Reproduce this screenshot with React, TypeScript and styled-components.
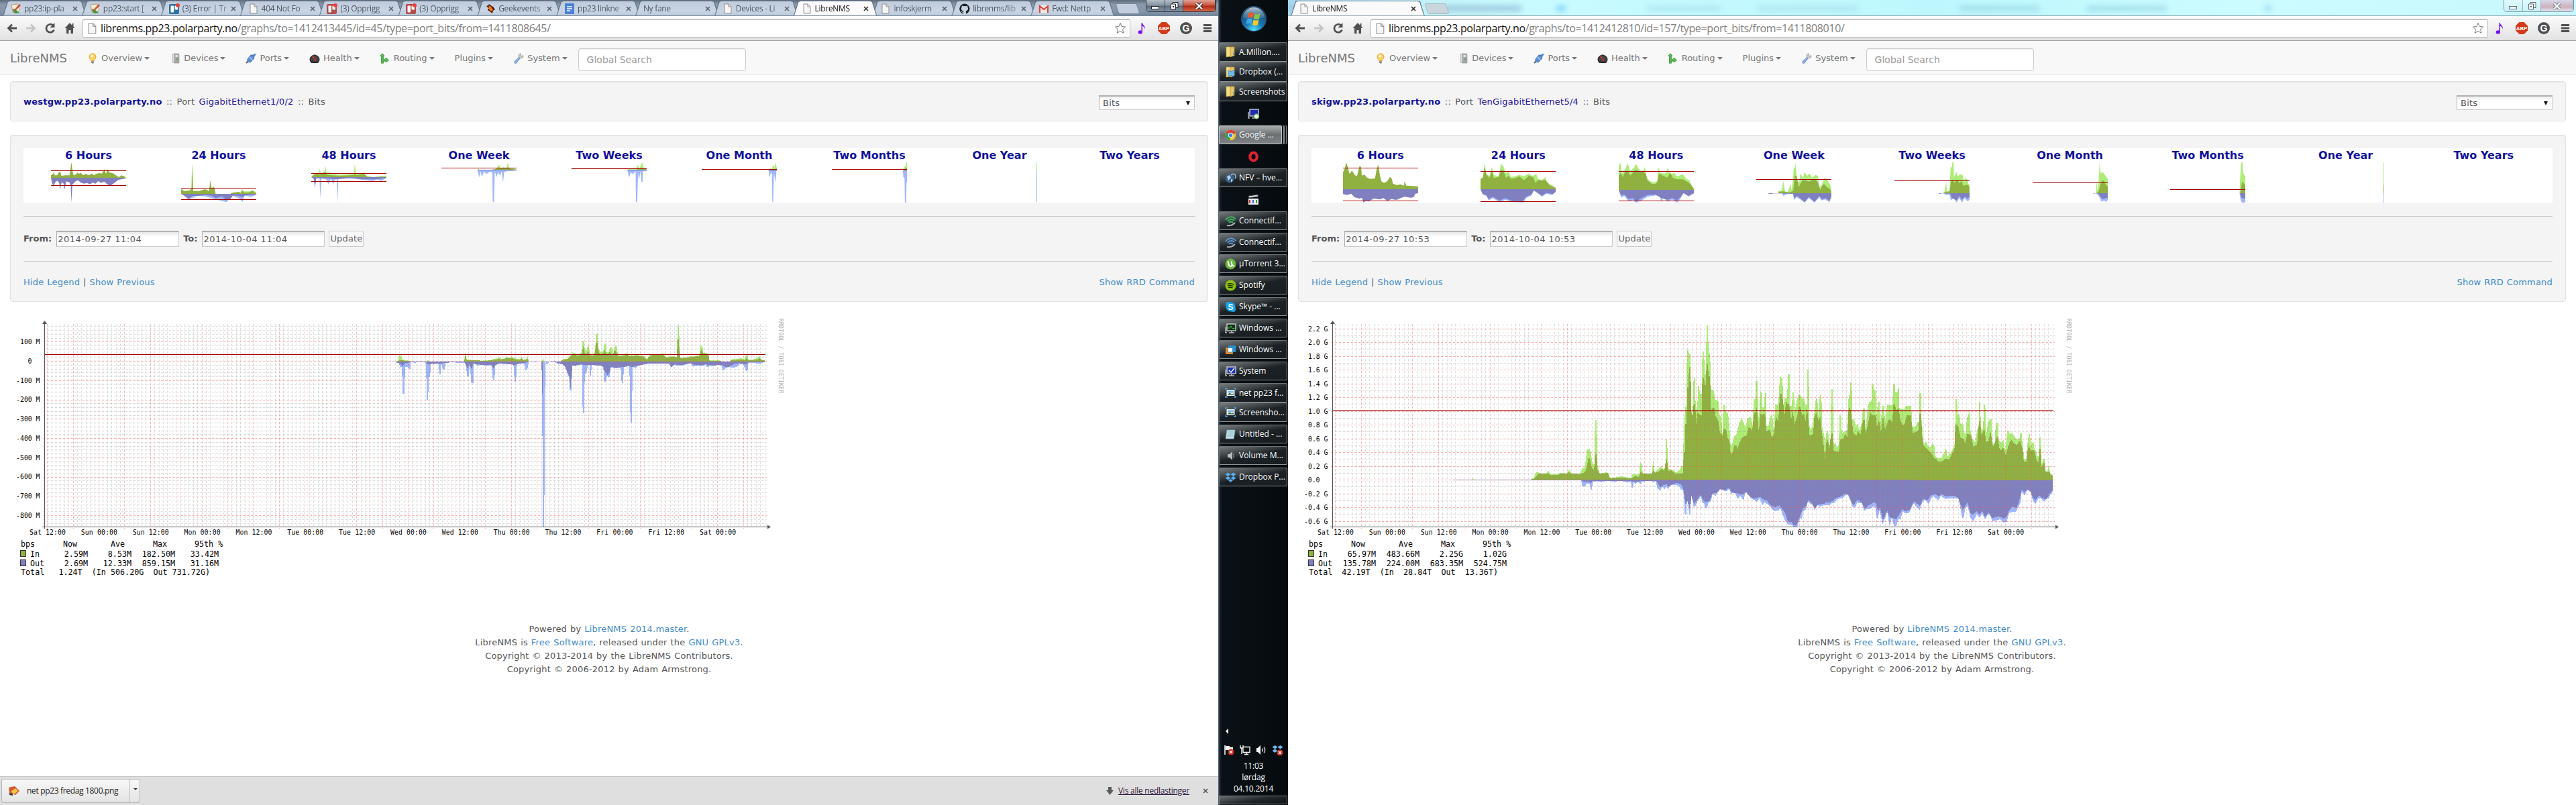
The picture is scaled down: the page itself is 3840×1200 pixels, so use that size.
import React from 'react';
import styled, { createGlobalStyle, css } from 'styled-components';

const Global = createGlobalStyle`
  * { box-sizing: border-box; }
  body { margin: 0; background: #fff; }
`;

const verdana = "'DejaVu Sans', Verdana, sans-serif";
const segoe = "'Open Sans', 'Segoe UI', sans-serif";

/* ---------- shell ---------- */
const Desktop = styled.div`
  display: flex; width: 3840px; height: 1200px; overflow: hidden; background: #fff;
`;
const Window = styled.div<{ $w: number }>`
  width: ${p => p.$w}px; height: 1200px; flex: none; display: flex; flex-direction: column;
  background: #fff; font: 13px/20px ${verdana}; color: #555; overflow: hidden;
`;
const TitleBar = styled.div<{ $aero?: boolean }>`
  height: 24px; flex: none; display: flex; position: relative; padding-left: 3px; overflow: hidden;
  background: ${p => p.$aero
    ? 'linear-gradient(90deg,#a8d8ee 0,#c4f4fb 12%,#c8fbff 20%,#bdf7fd 50%,#ccfcff 75%,#c8f8fd 100%)'
    : 'linear-gradient(180deg,#5d6b7b 0,#8b9bae 30%,#8495a9 75%,#74869b 100%)'};
  border-bottom: 1px solid ${p => (p.$aero ? '#8fa9ae' : '#76879b')};
`;
const Haze = styled.i<{ $l: number; $w: number; $c: string }>`
  position: absolute; left: ${p => p.$l}px; width: ${p => p.$w}px; top: 9px; height: 7px;
  background: ${p => p.$c}; filter: blur(4px); opacity: .7;
`;
const TabBox = styled.div<{ $active?: boolean; $wide?: boolean }>`
  position: relative; flex: none; display: flex; align-items: center; height: 24px;
  width: ${p => (p.$wide ? 202 : 127)}px; margin-right: -9.15px; padding: 2px 14px 0 13px;
  clip-path: polygon(0 100%, 2px 90%, 8px 6%, 11px 1px, calc(100% - 11px) 1px, calc(100% - 8px) 6%, calc(100% - 2px) 90%, 100% 100%);
  background: #66778a; z-index: ${p => (p.$active ? 2 : 1)};
  font: 12px/18px ${segoe}; letter-spacing: -0.3px; color: ${p => (p.$active ? '#111' : '#4b5560')};
  &::before {
    content: ''; position: absolute; inset: 2px 0 0 0; z-index: -1;
    clip-path: polygon(1px 100%, 3px 90%, 9px 5%, 12px 0, calc(100% - 12px) 0, calc(100% - 9px) 5%, calc(100% - 3px) 90%, calc(100% - 1px) 100%);
    background: ${p => (p.$active ? '#fafafa' : 'linear-gradient(180deg,#bfcbdc,#c9d5e5 60%,#bccada)')};
  }
`;
const TabText = styled.span<{ $noicon?: boolean }>`
  flex: 1; min-width: 0; margin-left: ${p => (p.$noicon ? 0 : 4)}px; white-space: nowrap; overflow: hidden;
  mask-image: linear-gradient(90deg,#000 75%,rgba(0,0,0,.15) 100%);
`;
const NewTab = styled.div<{ $aero?: boolean }>`
  flex: none; width: 32px; height: 16px; margin: 5px 0 0 ${p => (p.$aero ? 10 : 12)}px; transform: skewX(18deg);
  border-radius: 3px; background: ${p => (p.$aero ? '#c9d6db' : '#c2cedd')}; border: 1px solid ${p => (p.$aero ? '#a7bcc2' : '#78899c')};
`;
const Controls = styled.div<{ $aero?: boolean }>`
  position: absolute; right: 3px; top: 0; height: 18px; display: grid; grid-template-columns: 28px 27px 48px;
  border: 1px solid ${p => (p.$aero ? '#7c9aa3' : '#2f3842')}; border-top: 0; border-radius: 0 0 5px 5px; overflow: hidden;
`;
const ControlCell = styled.span<{ $kind: 'plain' | 'close'; $aero?: boolean }>`
  display: flex; align-items: center; justify-content: center;
  border-right: 1px solid ${p => (p.$aero ? '#9ab7bf' : '#3c4651')};
  background: ${p => p.$aero
    ? (p.$kind === 'close' ? 'linear-gradient(180deg,#d7d9ec,#cfb0bb 60%,#dfe6f6)' : 'linear-gradient(180deg,#dffafe,#c9f0f6)')
    : (p.$kind === 'close' ? 'linear-gradient(180deg,#e0a193,#c9513c 48%,#b02a14 52%,#d8684a)' : 'linear-gradient(180deg,#b4bec9,#8592a1 48%,#5f6c7b 52%,#8393a5)')};
`;

/* ---------- toolbar ---------- */
const Toolbar = styled.div`
  height: 37px; flex: none; display: flex; align-items: center; padding: 0 8px;
  background: linear-gradient(180deg,#fbfbfb,#e2e2e2); border-bottom: 1px solid #a3a3a3;
`;
const NavButtons = styled.div`
  width: 115px; display: grid; grid-template-columns: 28px 29px 29px 29px; flex: none;
  & > svg { display: block; margin-left: 1px; }
`;
const Omnibox = styled.div`
  flex: 1; height: 27px; display: flex; align-items: center; padding: 0 5px 0 5px; background: #fff;
  border: 1px solid #b9b9b9; border-top-color: #9c9c9c; border-radius: 2px;
`;
const Url = styled.span`
  flex: 1; margin-left: 4px; font: 16px/24px ${segoe}; letter-spacing: -0.36px; color: #808080; white-space: nowrap;
  b { font-weight: 400; color: #111; }
`;
const Extensions = styled.div`
  width: 123px; flex: none; display: grid; grid-template-columns: 32px 33px 32px 18px; padding-left: 9px;
`;

/* ---------- site header ---------- */
const Navbar = styled.nav`
  height: 51px; flex: none; display: flex; align-items: center; padding-left: 15px;
  background: #f8f8f8; border-bottom: 1px solid #e7e7e7; color: #777;
`;
const Brand = styled.span` font-size: 18px; width: 100px; margin-top: 1px; `;
const NavItem = styled.span`
  display: flex; align-items: center; padding: 2px 15px 0;
  & > svg { margin-right: 5px; }
  &::after { content: ''; margin-left: 3px; border: 4px solid transparent; border-top-color: #777; border-bottom: 0; }
`;
const SearchBox = styled.div`
  width: 250px; height: 34px; margin: 6px 0 0 1px; padding: 0 12px; border: 1px solid #ccc; border-radius: 4px; background: #fff;
  font-size: 14px; line-height: 32px; color: #999; box-shadow: inset 0 1px 1px rgba(0,0,0,.07);
`;

/* ---------- panels ---------- */
const Well = styled.section<{ $h: number; $mt: number }>`
  flex: none; height: ${p => p.$h}px; margin: ${p => p.$mt}px 15px 0; padding: 0 19px; background: #f4f4f4;
  border: 1px solid #e2e2e2; border-radius: 4px; box-shadow: inset 0 1px 1px rgba(0,0,0,.05);
`;
const TitleRow = styled.div`
  display: flex; align-items: center; justify-content: space-between; height: 60px; padding-bottom: 1px;
  letter-spacing: .23px; word-spacing: 2px;
  a { color: #1a0fa0; } a.host { font-weight: 700; color: #11119b; }
`;
const Select = styled.div`
  width: 143px; height: 22px; display: flex; align-items: center; justify-content: space-between; padding: 1px 5px 0;
  margin-top: 3px; border: 1px solid #ccc; border-top: 2px solid #b0b0b0; border-left-color: #b0b0b0; background: linear-gradient(180deg,#eee,#fff 30%);
  &::after { content: ''; border: 3px solid transparent; border-top: 6px solid #111; border-bottom: 0; margin-right: 1px; }
`;
const Strip = styled.div`
  display: grid; grid-template-columns: repeat(9, 1fr); height: 81px; margin-top: 19px; background: #fff;
`;
const Cell = styled.div`
  display: flex; flex-direction: column; align-items: center;
  b { font-size: 16px; line-height: 21px; color: #11119b; }
  svg { display: block; }
`;
const Rule = styled.div<{ $mt: number }>` height: 1px; background: #c8c8c8; margin-top: ${p => p.$mt}px; `;
const FormRow = styled.div`
  display: flex; align-items: center; gap: 6px; height: 24px; margin-top: 21px; b { margin-right: 1px; }
`;
const Field = styled.span<{ $w: number; $button?: boolean }>`
  width: ${p => p.$w}px; height: 24px; padding-left: 1px; line-height: 22px; white-space: nowrap;
  letter-spacing: ${p => (p.$button ? 0.15 : 0.5)}px;
  border: 1px solid #ccc; border-top: 2px solid #b0b0b0; border-left-color: #b0b0b0;
  background: linear-gradient(180deg,#e8e8e8,#fff 35%);
  ${p => p.$button && css`border-top-width: 1px; border-color: #ccc; background: #f8f8f8; color: #666;`}
`;
const LinkRow = styled.div`
  display: flex; justify-content: space-between; margin-top: 21px; letter-spacing: .2px; word-spacing: .5px;
`;
const Link = styled.a` color: #428bca; `;
const GraphArea = styled.div` height: 410px; flex: none; margin-top: 10px; svg { display: block; } `;
const Footer = styled.footer`
  margin-top: 58px; text-align: center; line-height: 20px; letter-spacing: .2px; word-spacing: .6px;
`;

/* ---------- download bar ---------- */
const DownloadBar = styled.div`
  height: 43px; flex: none; margin-top: auto; display: flex; align-items: center; padding: 0 15px 0 2px;
  background: #dfdfdf; border-top: 1px solid #c6c6c6; font: 12px/16px ${segoe}; color: #222;
`;
const DownloadItem = styled.div`
  width: 207px; height: 36px; display: grid; grid-template-columns: 190px 17px; border: 1px solid #b5b5b5; border-radius: 3px;
  background: linear-gradient(180deg,#f7f7f7,#e4e4e4);
  & > span { display: flex; align-items: center; gap: 10px; padding-left: 9px; letter-spacing: -0.33px; }
  & > i { border-left: 1px solid #c0c0c0; display: flex; justify-content: center; padding-top: 13px; }
  & > i::after { content: ''; height: 0; border: 3px solid transparent; border-top-color: #333; border-bottom: 0; }
`;
const ShowAll = styled.span`
  margin-left: auto; display: flex; align-items: center; gap: 7px;
  u { margin-right: 13px; color: #2a1238; letter-spacing: -0.25px; }
`;

/* ---------- taskbar ---------- */
const Taskbar = styled.aside`
  width: 104px; height: 1200px; flex: none; display: flex; flex-direction: column; padding: 0 1px;
  background: linear-gradient(90deg,#5b7080 0,#1d2b35 2px,#0a1116 5px,#050a0d 100%); color: #fff; font: 12px/16px ${segoe};
`;
const Orb = styled.div` height: 63px; flex: none; display: flex; justify-content: center; padding: 9px 0 0 1px; `;
const Task = styled.div<{ $mt: number; $h?: number; $lit?: boolean }>`
  flex: none; height: ${p => p.$h ?? 28}px; margin-top: ${p => p.$mt}px; display: flex; align-items: center; gap: 4px; padding-left: 8px;
  border: 1px solid #6d7477; border-right-color: #a3a8aa; border-bottom-color: #8c9294; border-radius: 2px; white-space: nowrap; overflow: hidden;
  background: linear-gradient(170deg,#777c7e 0,#3e4446 32%,#1b2124 50%,#171d20 100%);
  ${p => p.$lit && css`
    background: linear-gradient(180deg,#a9acad,#6c7072 50%,#7e8284); width: 94px; border-color: #c2c5c6;
    box-shadow: 2px 0 0 #15191b, 4px 0 0 #8c9092, 6px 0 0 #15191b, 8px 0 0 #6a6e70;
  `}
  & > svg { flex: none; }
`;
const TaskIcon = styled.div<{ $h: number }>` flex: none; height: ${p => p.$h}px; display: flex; align-items: center; justify-content: center; `;
const TrayArrow = styled.div` margin: auto 0 16px 10px; height: 8px; width: 0; border: 4px solid transparent; border-right-color: #fff; border-left: 0; `;
const Tray = styled.div` display: grid; grid-template-columns: repeat(4, 24px); height: 18px; padding-left: 7px; flex: none; `;
const Clock = styled.div` text-align: center; line-height: 17px; margin: 5px 0 2px; padding-left: 1px; letter-spacing: -0.2px; flex: none; `;
const ShowDesktop = styled.div`
  height: 13px; margin-bottom: 1px; flex: none; border: 1px solid #767c7f; background: linear-gradient(170deg,#686d70,#23292c 50%,#0f1416);
`;

/* ---------- icons ---------- */
const Close = ({ c = '#555' }: { c?: string }) => (
  <svg width="8" height="8" viewBox="0 0 8 8"><path d="M1 1l6 6M7 1l-6 6" stroke={c} strokeWidth="1.7" /></svg>
);
const Page = ({ s = 16 }: { s?: number }) => (
  <svg width={s} height={s} viewBox="0 0 16 16"><path d="M3 1h6l4 4v10H3z" fill="#f6f6f6" stroke="#8d8d8d" /><path d="M9 1v4h4" fill="none" stroke="#8d8d8d" /></svg>
);
const Favicon = ({ k }: { k: string }) => {
  const box = { width: 16, height: 16, viewBox: '0 0 16 16', style: { flex: 'none' } };
  switch (k) {
    case 'wiki': return <svg {...box}><path d="M1 2l9-1 4 8-6 6-5-2z" fill="#f0ead2" stroke="#b59b7a" /><path d="M3 8l4 1 6 5-5 1-4-2z" fill="#3f9a3c" /><path d="M13 1l2 2-8 8-2 .6.5-2.2z" fill="#cc4b34" /></svg>;
    case 'trello': case 'trellor': return <svg {...box}><rect y="1" width="15" height="15" rx="2" fill={k === 'trello' ? '#2d74a5' : '#b34c4c'} /><rect x="2.5" y="3.5" width="4.5" height="10" rx="1" fill="#fff" /><rect x="8.5" y="3.5" width="4.5" height="6" rx="1" fill="#fff" /><circle cx="13" cy="3" r="3" fill="#e8433f" /></svg>;
    case 'geek': return <svg {...box}><path d="M6 1l4 3 2 1 3 4-3 2-1 4-4-3-3-2 1-3-3-3 3-1z" fill="#4a1c0a" /><path d="M6 3l3 2 3 5-3 2-4-4z" fill="#f0761a" /></svg>;
    case 'doc': return <svg {...box}><rect x="1" width="14" height="16" rx="1" fill="#4a80dd" /><path d="M4 5h8M4 8h8M4 11h5" stroke="#fff" strokeWidth="1.3" /></svg>;
    case 'git': return <svg {...box}><path fill="#1b1f23" d="M8 .5a7.7 7.7 0 0 0-2.5 15c.4 0 .5-.2.5-.4v-1.5c-2.2.5-2.6-1-2.6-1-.4-.9-.9-1.100-.9-1.100-.7-.5 0-.5 0-.5.8 0 1.200.8 1.200.8.7 1.200 1.800.9 2.300.7 0-.5.3-.9.5-1.100-1.700-.2-3.500-.9-3.500-3.800 0-.8.3-1.500.8-2.100 0-.2-.3-1 .1-2.100 0 0 .7-.2 2.200.8a7 7 0 0 1 3.900 0c1.500-1 2.100-.8 2.100-.8.4 1.100.2 1.900.1 2.100.5.6.8 1.300.8 2.100 0 2.900-1.800 3.600-3.500 3.800.3.200.5.7.5 1.400v2.200c0 .2.100.5.500.4A7.700 7.700 0 0 0 8 .5z" /></svg>;
    case 'gmail': return <svg {...box}><rect x="1" y="3" width="14" height="11" fill="#f4ecea" /><path d="M2 14V4l6 5 6-5v10" fill="none" stroke="#d9483b" strokeWidth="2.2" /></svg>;
    default: return <Page />;
  }
};
const NavIcon = ({ k }: { k: string }) => {
  const box = { width: 16, height: 16, viewBox: '0 0 16 16' };
  switch (k) {
    case 'bulb': return <svg {...box}><path d="M8 .7a5 5 0 0 0-3 9c.6.6.8 1 .8 1.800h4.400c0-.8.200-1.200.800-1.800a5 5 0 0 0-3-9z" fill="#fbd469" stroke="#e3a12b" /><circle cx="7" cy="4.500" r="2" fill="#fff8dc" /><path d="M6 12.200h4v2.300L9 15.500H7l-1-1z" fill="#8b8b8b" /></svg>;
    case 'server': return <svg {...box}><path d="M6 1h7l1 2v12H6z" fill="#a9a9a9" stroke="#888" strokeWidth=".6" /><path d="M4 2l3-1v14l-3-1z" fill="#dedede" stroke="#999" strokeWidth=".6" /><path d="M8.500 3.500h4M8.500 5.500h4" stroke="#eee" /><path d="M10 8.500h2v2h-2z" fill="#4fa04c" /></svg>;
    case 'plug': return <svg {...box}><path d="M1 15l3-3" stroke="#557" strokeWidth="1.800" /><path d="M3 9l5-6 4 0 2-2 1 1-2 3-1 4-5 5-4-1z" fill="#5c8fd6" stroke="#2f5da6" strokeWidth=".8" /><path d="M6 6l4 4" stroke="#bcd3f3" strokeWidth="1.200" /></svg>;
    case 'gauge': return <svg {...box}><path d="M2 13a7 6.500 0 1 1 12 0l-1 1.500H3z" fill="#3c3c3c" stroke="#222" /><path d="M4 10a4 4 0 0 1 8 0" fill="none" stroke="#999" strokeDasharray="1 1.200" /><path d="M5 5l5 7" stroke="#e33" strokeWidth="1.300" /></svg>;
    case 'route': return <svg {...box}><path d="M4 .8L7.200 4.500H5.400v5c1.500 0 3.600-.5 3.600-2.500l4.500 3.500L9.500 14v-1.800H5.400v3H2.600V4.500H.8z" fill="#5fbb57" stroke="#2c8a2b" strokeWidth=".8" /></svg>;
    default: return <svg {...box}><path d="M8.500 6.500L2 12.500a1.900 1.900 0 0 0 2.500 2.700L10 8z" fill="#8fb2f0" stroke="#4f78c4" strokeWidth=".8" /><path d="M8 5.500c-.5-2.500 1-4.500 3.500-4.500L10.800 3.500l1.500 1.300L15 3.800c.2 2.600-2 4.500-4.500 4z" fill="#ccc" stroke="#888" strokeWidth=".8" /></svg>;
  }
};
const ToolIcon = ({ k }: { k: string }) => {
  const p = { width: 18, height: 18, viewBox: '0 0 18 18' };
  switch (k) {
    case 'back': return <svg {...p}><path d="M16 9H4M9 3.500L3.500 9 9 14.500" fill="none" stroke="#505050" strokeWidth="2.800" /></svg>;
    case 'fwd': return <svg {...p}><path d="M2 9h12M9 3.500L14.500 9 9 14.500" fill="none" stroke="#c4c4c4" strokeWidth="2.600" /></svg>;
    case 'reload': return <svg {...p}><path d="M14.500 11.500A6 6 0 1 1 13 4.800" fill="none" stroke="#505050" strokeWidth="2.700" /><path d="M15.500 1v7h-7z" fill="#505050" /></svg>;
    case 'home': return <svg {...p}><path d="M9 1L1.500 9H4v8h3.500v-5h3v5H14V9h2.500L14.500 6.800V2h-2v2.700z" fill="#505050" /></svg>;
    case 'star': return <svg {...p}><path d="M9 1.500l2.200 5 5.400.5-4 3.700 1.200 5.600L9 13.400l-4.800 2.900 1.200-5.600-4-3.700 5.400-.5z" fill="#fff" stroke="#777" /></svg>;
    case 'note': return <svg {...p}><path d="M8.200 1v13" stroke="#7a11f0" strokeWidth="1.500" /><ellipse cx="5.800" cy="15" rx="3.200" ry="2.700" fill="#7a11f0" /><path d="M8 0c.5 4 6 5 5 11-.5-4-3-5-5-5.500z" fill="#7a11f0" /></svg>;
    case 'abp': return <svg {...p}><path d="M5.500 0h7L18 5.500v7L12.500 18h-7L0 12.500v-7z" fill="#d23a1b" /><text x="9" y="12" fontSize="7.800" fontWeight="700" fontFamily="Liberation Sans" fill="#fff" textAnchor="middle">ABP</text></svg>;
    case 'g': return <svg {...p}><circle cx="9" cy="9" r="9" fill="#4f4f4f" /><text x="9" y="14.200" fontSize="14" fontWeight="700" fontFamily="Liberation Sans" fill="#fff" textAnchor="middle">G</text></svg>;
    default: return <svg {...p}><path d="M4 4.500h10M4 9h10M4 13.500h10" stroke="#505050" strokeWidth="2.800" strokeLinecap="round" /></svg>;
  }
};
const Folder = ({ box }: { box?: boolean }) => (
  <svg width="17" height="17" viewBox="0 0 17 17"><path d="M2 1h6v14l-6 1z" fill="#f3dd85" stroke="#c7a544" strokeWidth=".7" /><path d="M8 1h6v13l-6 2z" fill="#e3c667" stroke="#b99430" strokeWidth=".7" /><path d="M12.500 9v4" stroke="#4aa3d8" />{box && <path d="M6 6l3 2 3-2 3 2-2 2 2 2-3 3-3-2-3 2-2-3 2-2-2-2z" fill="#6fb9f1" stroke="#2277bd" strokeWidth=".6" />}</svg>
);
const TaskGlyph = ({ k }: { k: string }) => {
  const p = { width: 17, height: 17, viewBox: '0 0 17 17' };
  const screen = (inner: React.ReactNode, fill: string) => <svg {...p}><rect x="3" y="2" width="13" height="10" fill={fill} stroke="#ccc" strokeWidth="1.400" /><path d="M6 15h8M10 12v3M1 6v9h2" stroke="#bbb" strokeWidth="1.500" fill="none" />{inner}</svg>;
  switch (k) {
    case 'folder': return <Folder />;
    case 'dbfolder': return <Folder box />;
    case 'rdp': return screen(<circle cx="13" cy="12.500" r="3.800" fill="#e8f5e4" stroke="#3a9632" />, '#1d2fb6');
    case 'chrome': return <svg {...p}><circle cx="8.500" cy="8.500" r="7.800" fill="#f2c530" /><path d="M8.500 8.500L1.700 4.700A7.800 7.800 0 0 1 15.800 5.600z" fill="#dc3f2e" /><path d="M8.500 8.500L7.500 16.200A7.800 7.800 0 0 1 1.700 4.700z" fill="#35a14c" /><circle cx="8.500" cy="8.500" r="3.700" fill="#fff" /><circle cx="8.500" cy="8.500" r="2.800" fill="#3f7fe8" /></svg>;
    case 'opera': return <svg {...p}><ellipse cx="8.500" cy="8.500" rx="5.200" ry="6" fill="none" stroke="#df2434" strokeWidth="4.200" /></svg>;
    case 'globe': return <svg {...p}><circle cx="7" cy="9" r="6.500" fill="#39618d" /><path d="M3 6l4-2 2 4-4 4zM9 10l3 1-3 4z" fill="#b7d2e8" /><path d="M9 4c4-4 9 0 6 5" fill="none" stroke="#9cc0de" strokeWidth="1.500" /></svg>;
    case 'clap': return <svg {...p}><path d="M1 3l14-2 .500 3-14 2z" fill="#ddd" stroke="#333" /><rect x="1" y="7" width="15" height="9" fill="#eee" /><path d="M3 9v5" stroke="#c33" strokeWidth="2" /><path d="M8 9v5" stroke="#36c" strokeWidth="2" /><path d="M13 9v5" stroke="#393" strokeWidth="2" /></svg>;
    case 'cgreen': case 'cblue': { const c = k === 'cgreen' ? '#3fbf62' : '#5d9be0'; return <svg {...p}><path d="M1 7c4-6 11-6 15-1M4 9c3-4 7-4 10-1M6 11c2-2 4-2 6 0" fill="none" stroke={c} strokeWidth="1.800" /><path d="M3 15c4 1 9-1 12-4" stroke="#a9b3ba" strokeWidth="2" fill="none" /></svg>; }
    case 'ut': return <svg {...p}><circle cx="8.500" cy="8.500" r="8" fill="#6cb33f" /><path d="M4.500 4.500l1.500 6c2 3 5 1 4.500-1l-1-5M10.500 9.500c1 2 2 2 3.500 2" stroke="#fff" strokeWidth="2" fill="none" /></svg>;
    case 'spot': return <svg {...p}><circle cx="8.500" cy="8.500" r="8" fill="#8fc412" /><path d="M3.500 6.500c3.500-1.200 7-1 10 .8M4 9.200c3-1 6-.8 8.500.8M4.800 11.700c2.500-.8 4.700-.6 6.700.6" stroke="#1c2708" strokeWidth="1.400" fill="none" /></svg>;
    case 'skype': return <svg {...p}><circle cx="8.500" cy="8.500" r="7" fill="#12a5f0" /><circle cx="5" cy="5" r="4" fill="#12a5f0" /><circle cx="12" cy="12" r="4" fill="#12a5f0" /><text x="8.500" y="13" fontSize="12" fontWeight="700" fontFamily="Liberation Sans" fill="#fff" textAnchor="middle">S</text></svg>;
    case 'perf': return screen(<path d="M4 8h3l2-3 2 4 4-1" stroke="#35d235" fill="none" />, '#12301b');
    case 'vm': return <svg {...p}><rect x="5" y="2" width="11" height="10" rx="1" fill="#2f8fce" /><rect x="1" y="5" width="11" height="10" rx="1" fill="#f08a24" /><rect x="4.500" y="5.500" width="7" height="6.500" fill="#fff" stroke="#2f8fce" /></svg>;
    case 'sys': return screen(<path d="M6 7l3 3 5-6" stroke="#fff" strokeWidth="1.500" fill="none" />, '#1a34b8');
    case 'shot': return <svg {...p}><path d="M1 4V2h3M13 2h3v2M16 13v2h-3M4 15H1v-2" fill="none" stroke="#4fa4e0" strokeWidth="1.600" /><rect x="2.500" y="4" width="12" height="9" fill="#e9f2f7" /><path d="M4 5.500h9v3H4z" fill="#7cb9de" /><path d="M4 11.500l3-3 3 2 3-1v2z" fill="#35603a" /></svg>;
    case 'note': return <svg {...p}><path d="M3 2h12l-2 13H1z" fill="#c9e4ea" stroke="#7fa5ae" /><path d="M4 5h9M4 8h8M3 11h9" stroke="#7cb1bf" /></svg>;
    case 'vol': return <svg {...p}><path d="M4 6h3l4-4v13l-4-4H4z" fill="#b8bcbe" /><path d="M13 5v7" stroke="#777" strokeWidth="1.500" /></svg>;
    default: return <svg {...p}><path d="M4.500 1.500l4 2.700-4 2.700-4-2.700zM12.500 1.500l4 2.700-4 2.700-4-2.700zM4.500 7l4 2.700-4 2.700-4-2.700zM12.500 7l4 2.700-4 2.700-4-2.700zM8.500 11l3.500 2.300-3.500 2.500-3.500-2.500z" fill="#58aef0" /></svg>;
  }
};
const StartOrb = () => (
  <svg width="38" height="38" viewBox="0 0 38 38">
    <defs>
      <radialGradient id="orb" cx=".5" cy=".95" r=".9"><stop offset="0" stopColor="#4fe0ff" /><stop offset=".4" stopColor="#1878b4" /><stop offset="1" stopColor="#1c3d5c" /></radialGradient>
      <linearGradient id="gloss" x2="0" y2="1"><stop offset="0" stopColor="#d8e9f4" stopOpacity=".8" /><stop offset="1" stopColor="#8fb5d0" stopOpacity=".15" /></linearGradient>
    </defs>
    <circle cx="19" cy="19" r="18.500" fill="url(#orb)" stroke="#31597a" />
    <path d="M3 17a16 15 0 0 1 32 0c-8 3-22 4-32 0z" fill="url(#gloss)" />
    <path d="M11 11c3-2 5-2 8 0l-1.500 7c-3-2-5-1.500-8 0z" fill="#ee5a28" />
    <path d="M20.500 11.500c3 1.500 5 1.500 8-.5l-1.500 7.500c-3 2-5 2-8 .2z" fill="#8cc63e" />
    <path d="M9 20c3-2 5-2 8 0l-1.500 7c-3-2-5-1.500-8 0z" fill="#3fa8e8" />
    <path d="M18.500 20.500c3 1.500 5 1.500 8-.5L25 27.500c-3 2-5 2-8 .2z" fill="#fdc928" />
  </svg>
);

/* ---------- graph data ---------- */
const C = { lg: '#aeec78', dg: '#90b040', lb: '#a0b7ff', db: '#8080c0', red: '#aa0000' };

interface Series { lg: string; dg: string; lb: string; db: string; }

const west: Series = {
  lg: '775,236 777,210 782,210 784,228 795,233 800,236 830,236 834,231 837,236 904,236 907,188 909,228 920,230 930,236 945,231 957,231 960,226 967,224 972,218 977,224 982,226 987,215 991,219 998,217 1003,221 1010,226 1014,226 1016,214 1018,229 1024,228 1028,213 1030,236 1055,236 1058,225 1061,236 1092,236 1097,226 1105,226 1108,214 1112,208 1115,196 1121,200 1125,208 1133,196 1135,145 1138,145 1139,186 1143,186 1145,164 1147,166 1149,200 1155,208 1159,190 1161,114 1164,114 1166,178 1169,192 1175,192 1177,156 1180,156 1182,196 1186,194 1188,174 1193,174 1195,204 1198,165 1201,165 1204,208 1210,210 1216,206 1221,198 1225,208 1232,212 1240,206 1248,212 1254,210 1260,224 1266,208 1276,204 1284,206 1292,198 1296,216 1304,214 1310,212 1318,216 1320,75 1322,75 1325,220 1335,220 1343,214 1353,214 1362,208 1365,165 1368,165 1370,198 1376,198 1380,204 1382,232 1400,231 1405,236 1422,236 1426,226 1440,224 1444,220 1450,228 1453,206 1456,206 1458,228 1470,226 1475,220 1480,214 1483,228 1490,231 1490,236',
  dg: '775,236 778,232 785,232 800,236 904,236 907,205 909,232 925,232 945,233 957,232 962,229 972,225 977,228 987,221 998,222 1003,226 1012,230 1016,222 1020,232 1028,225 1030,236 1092,236 1097,228 1105,226 1110,218 1115,203 1121,206 1125,212 1133,204 1136,166 1139,200 1143,200 1146,190 1149,208 1155,213 1159,196 1161,160 1163,145 1166,190 1169,205 1175,200 1178,186 1182,206 1188,194 1193,208 1198,185 1201,200 1204,212 1216,210 1221,204 1225,212 1240,210 1254,215 1260,230 1266,210 1276,206 1292,206 1296,220 1310,216 1318,218 1321,118 1325,222 1343,218 1362,212 1366,182 1370,202 1376,202 1380,208 1382,233 1400,233 1405,236 1422,236 1426,231 1444,228 1450,232 1454,222 1458,232 1475,228 1480,222 1483,231 1490,232 1490,236',
  lb: '768,236 770,241 777,243 780,266 783,260 784,380 788,380 789,262 794,262 797,270 800,268 800,236 805,236 808,245 812,240 828,239 830,250 831,407 834,407 835,305 838,305 839,240 845,250 850,246 854,243 856,293 858,293 859,242 863,272 866,272 868,243 880,240 895,243 905,242 908,262 910,302 913,302 915,248 918,332 922,332 923,245 930,254 940,252 948,257 955,252 958,262 960,320 963,320 965,254 972,245 985,250 998,245 1001,262 1002,326 1005,326 1007,250 1016,245 1022,250 1024,278 1028,265 1030,236 1036,240 1053,238 1056,236 1057,976 1060,976 1062,236 1065,252 1070,238 1080,240 1090,250 1097,248 1102,265 1105,290 1109,310 1110,365 1113,365 1115,255 1121,258 1128,250 1134,252 1135,467 1138,467 1139,290 1142,290 1145,255 1148,250 1149,300 1151,300 1153,245 1160,257 1170,245 1175,265 1177,330 1180,328 1182,303 1187,308 1190,262 1200,268 1209,262 1211,333 1214,333 1215,262 1226,258 1228,510 1231,510 1232,258 1238,267 1244,255 1254,250 1265,246 1285,246 1303,246 1308,264 1313,252 1320,256 1330,254 1345,244 1350,260 1357,254 1365,258 1375,252 1376,262 1390,256 1400,252 1406,258 1408,278 1413,266 1420,262 1430,264 1438,258 1440,248 1448,250 1453,278 1456,278 1458,242 1470,243 1480,248 1485,242 1490,240 1490,236',
  db: '768,236 772,240 780,246 784,260 788,245 800,240 808,241 830,239 832,250 845,246 856,246 880,240 905,240 908,252 911,270 914,250 919,270 922,246 930,250 945,252 958,252 961,268 965,252 975,245 985,247 1003,252 1010,247 1028,240 1030,236 1053,236 1055,236 1056,500 1057,240 1062,236 1090,243 1100,256 1105,285 1109,300 1111,362 1115,255 1121,254 1134,248 1137,252 1160,253 1175,258 1178,280 1183,298 1186,290 1190,260 1200,266 1212,262 1225,256 1230,262 1238,258 1254,250 1265,245 1303,245 1308,262 1313,250 1330,252 1345,244 1355,254 1375,250 1390,254 1406,252 1413,262 1420,260 1430,248 1440,244 1454,250 1458,240 1490,240 1490,236',
};

const ski: Series = {
  lg: '345,767 347,757 349,767 461,767 461,757 466,760 468,738 473,730 478,737 490,737 494,724 498,740 512,742 518,735 530,737 535,720 539,737 556,738 560,715 564,715 566,692 569,634 574,624 577,644 580,697 584,697 585,498 588,498 590,698 594,737 602,735 606,731 611,735 614,757 625,755 636,750 650,755 655,757 657,742 667,740 671,740 673,690 676,690 678,738 696,738 698,672 701,730 707,722 712,706 718,716 722,712 723,585 725,585 728,718 735,720 742,732 750,722 753,706 756,705 758,540 761,438 763,438 764,183 767,183 768,204 771,204 772,450 775,480 777,309 780,309 781,450 784,450 786,345 788,345 789,380 793,380 794,192 797,192 799,295 801,295 802,75 805,75 806,200 809,202 811,360 816,368 820,408 825,413 828,480 831,482 833,560 835,432 838,432 840,465 844,465 847,530 849,616 853,598 856,570 860,568 862,544 866,510 871,490 874,510 878,530 882,490 888,484 892,520 894,408 897,405 898,324 901,324 904,508 907,372 910,372 911,440 914,440 916,378 918,378 919,524 923,524 926,485 930,465 933,558 936,430 942,428 945,306 950,309 952,430 955,398 959,400 961,294 964,294 965,436 968,436 970,375 972,375 974,460 978,410 982,382 986,390 988,402 992,402 995,430 998,430 998,273 1001,273 1003,538 1008,532 1012,470 1015,402 1018,402 1020,478 1023,388 1026,388 1028,556 1031,556 1033,610 1036,546 1039,546 1041,610 1044,610 1045,360 1048,360 1050,612 1053,596 1056,622 1060,610 1061,474 1064,474 1066,560 1070,550 1076,545 1079,388 1082,388 1082,330 1085,330 1086,495 1090,495 1093,530 1096,513 1100,545 1104,513 1107,447 1110,447 1112,550 1116,440 1119,418 1123,418 1124,337 1127,340 1129,366 1132,366 1133,482 1136,418 1139,418 1141,508 1145,435 1148,435 1150,508 1154,430 1164,432 1166,340 1169,340 1170,372 1174,372 1175,358 1177,358 1178,446 1183,450 1188,450 1190,436 1201,436 1203,530 1209,526 1213,508 1216,508 1217,378 1220,378 1221,495 1225,604 1230,595 1234,618 1239,618 1242,603 1246,615 1248,660 1254,670 1260,670 1263,648 1266,648 1267,625 1269,625 1271,664 1275,650 1280,636 1284,615 1286,600 1287,405 1290,405 1291,474 1295,474 1297,516 1302,516 1304,560 1308,556 1309,486 1312,484 1313,460 1315,460 1316,540 1320,585 1326,598 1329,540 1332,540 1333,418 1335,418 1337,540 1341,540 1342,430 1345,430 1347,570 1350,510 1354,495 1357,495 1359,602 1364,602 1365,530 1367,510 1370,510 1371,585 1376,600 1381,588 1384,640 1388,546 1391,546 1393,564 1397,552 1401,570 1407,585 1412,580 1413,557 1416,557 1417,590 1421,672 1425,672 1427,608 1430,562 1432,562 1434,608 1439,595 1441,632 1445,640 1446,660 1449,660 1451,576 1453,576 1455,695 1458,672 1461,672 1462,726 1466,728 1468,704 1470,704 1471,737 1475,742 1477,747 1477,767',
  dg: '461,767 461,762 466,762 469,756 473,742 478,738 494,738 498,743 512,744 518,738 530,738 535,732 539,738 556,740 562,735 566,728 569,708 572,670 575,670 578,708 583,724 585,652 588,652 590,722 594,738 602,738 610,734 614,758 636,755 655,760 662,750 670,752 674,728 678,738 696,738 698,720 702,735 709,728 714,716 720,728 723,675 725,675 728,728 733,722 742,738 756,738 758,642 760,642 761,515 763,515 765,355 767,355 768,262 771,262 773,476 776,476 777,426 780,426 782,516 785,463 789,476 793,478 794,308 797,308 799,342 801,342 802,248 805,248 806,304 809,304 811,458 814,444 818,446 820,482 825,502 828,550 833,568 836,535 840,540 844,585 847,590 849,652 853,645 856,612 860,612 862,628 866,600 872,575 880,568 884,530 888,535 891,548 895,465 898,465 900,440 904,552 907,470 912,475 916,470 919,548 926,540 929,578 934,560 937,480 942,508 945,382 948,382 951,410 954,484 957,415 960,426 963,426 967,495 970,460 974,516 979,478 982,440 985,440 988,476 992,470 995,502 998,440 1003,568 1010,562 1012,488 1016,464 1020,500 1024,482 1027,560 1030,604 1033,672 1036,588 1039,588 1041,628 1045,558 1048,558 1050,635 1060,642 1062,584 1068,584 1072,560 1076,575 1079,445 1082,445 1084,474 1088,555 1094,568 1097,550 1102,562 1107,498 1110,498 1112,562 1117,510 1121,462 1125,478 1132,478 1134,535 1138,495 1142,555 1146,478 1150,542 1156,500 1160,495 1164,510 1166,430 1169,430 1172,458 1176,440 1180,500 1184,524 1188,516 1192,476 1200,476 1204,555 1210,552 1215,542 1217,470 1220,470 1222,570 1225,612 1230,622 1234,635 1240,645 1246,668 1254,684 1263,682 1267,672 1275,674 1280,650 1285,632 1287,520 1291,520 1293,532 1297,578 1303,584 1306,602 1310,560 1314,562 1318,570 1322,618 1329,608 1333,505 1335,505 1338,570 1343,532 1347,598 1352,590 1355,545 1360,618 1364,602 1367,573 1370,573 1372,622 1376,635 1380,620 1385,658 1389,620 1393,595 1397,588 1401,604 1407,610 1413,590 1418,632 1420,684 1425,684 1427,640 1430,614 1434,636 1440,632 1446,684 1449,684 1451,627 1453,627 1455,708 1460,686 1463,732 1470,728 1472,742 1477,747 1477,767',
  lb: '558,767 560,795 564,795 565,800 568,784 574,784 577,810 579,810 580,774 590,772 595,776 610,770 620,774 636,771 645,776 652,776 655,776 656,800 659,800 660,776 664,785 668,774 674,784 678,774 684,772 693,770 697,776 704,772 706,805 710,808 712,816 716,795 720,808 724,793 727,812 731,790 740,788 748,792 752,808 756,812 758,835 760,922 763,922 764,862 767,862 768,920 771,920 772,840 775,842 777,887 781,882 785,860 788,850 791,838 794,868 797,870 799,888 803,893 806,868 811,862 814,828 820,838 824,820 828,812 832,800 836,815 842,818 846,806 850,828 858,822 862,850 868,838 874,858 878,822 884,832 890,852 896,855 900,865 906,848 911,880 915,868 922,875 928,892 934,905 942,904 946,893 951,925 956,952 961,965 968,968 972,975 979,975 984,940 988,938 990,908 996,898 1000,862 1004,874 1009,876 1013,902 1018,880 1024,885 1032,878 1036,880 1042,880 1046,870 1052,868 1056,854 1062,850 1068,846 1074,832 1078,835 1082,858 1087,888 1092,888 1096,868 1100,870 1105,870 1109,906 1114,898 1120,896 1128,884 1131,890 1134,938 1136,938 1139,905 1142,930 1145,965 1148,950 1154,910 1158,965 1160,965 1163,932 1167,971 1172,971 1176,940 1180,945 1184,908 1190,916 1196,915 1202,888 1206,870 1210,885 1217,900 1222,868 1228,852 1234,876 1240,848 1244,840 1250,850 1254,858 1258,838 1268,852 1276,848 1282,848 1288,850 1293,850 1296,885 1300,935 1303,935 1306,895 1311,882 1316,935 1322,953 1328,920 1334,935 1339,918 1345,942 1350,920 1355,925 1359,951 1366,948 1374,942 1380,957 1387,953 1392,912 1398,910 1405,908 1411,880 1414,866 1416,820 1422,835 1427,812 1433,820 1438,862 1443,873 1448,850 1454,848 1459,862 1466,850 1470,846 1472,828 1475,828 1477,810 1477,767',
  db: '309,765 309,769 395,769 395,765 395,767 558,767 562,773 572,773 577,781 580,770 636,770 655,772 664,774 675,772 704,770 708,785 712,800 718,790 724,786 728,797 736,785 744,780 752,785 757,806 761,872 765,862 769,890 773,840 778,874 784,855 791,832 795,855 800,866 808,860 814,824 822,825 828,806 836,812 846,803 852,822 862,826 868,830 874,830 880,820 886,840 895,850 906,842 914,855 920,860 928,882 936,888 944,880 951,900 956,918 961,952 968,955 972,970 977,970 984,928 990,894 996,884 1000,856 1006,868 1013,892 1020,875 1030,874 1036,866 1044,866 1054,848 1064,840 1074,825 1080,838 1088,880 1096,855 1104,865 1110,895 1118,880 1128,866 1132,872 1136,904 1140,890 1146,945 1154,905 1160,935 1166,938 1172,942 1178,920 1184,896 1190,908 1198,900 1206,862 1212,872 1218,882 1224,850 1232,858 1240,835 1248,830 1254,840 1260,830 1268,840 1284,836 1292,845 1297,876 1301,900 1306,882 1311,866 1316,915 1322,922 1328,906 1334,922 1339,905 1345,930 1352,912 1359,938 1366,932 1374,930 1380,940 1388,928 1392,900 1398,885 1406,892 1411,862 1416,812 1422,822 1427,808 1433,815 1438,845 1443,856 1450,836 1458,850 1464,852 1470,830 1477,810 1477,767',
};

const SX = 1200 / 1568;
interface GraphProps {
  data: Series; offset: number; zeroY: number; major: number; sub: number;
  labels: string[]; firstY: number; redY: number; rows: string[][]; total: string;
}
const Graph = ({ data, offset, zeroY, major, sub, labels, firstY, redY, rows, total }: GraphProps) => {
  const L = 66, T = 483, R = 1143, B = 785;
  const hours = Array.from({ length: 168 }, (_, i) => i);
  const minorStep = major / sub;
  const up = Math.floor((zeroY - T) / minorStep), down = Math.floor((B - zeroY) / minorStep);
  const lines = Array.from({ length: up + down + 1 }, (_, i) => i - up);
  const days = ['Sat 12:00', 'Sun 00:00', 'Sun 12:00', 'Mon 00:00', 'Mon 12:00', 'Tue 00:00', 'Tue 12:00', 'Wed 00:00', 'Wed 12:00', 'Thu 00:00', 'Thu 12:00', 'Fri 00:00', 'Fri 12:00', 'Sat 00:00'];
  const mono = "'DejaVu Sans Mono', monospace";
  return (
    <svg width="1200" height="410" viewBox="0 460 1200 410" fontFamily={mono} fill="#000">
      <g transform={`translate(${offset} 460) scale(${SX} .33333)`} shapeRendering="crispEdges">
        <polygon points={data.lg} fill={C.lg} /><polygon points={data.dg} fill={C.dg} />
        <polygon points={data.lb} fill={C.lb} /><polygon points={data.db} fill={C.db} />
      </g>
      <g shapeRendering="crispEdges" strokeWidth="1" strokeDasharray="1 1">
        {hours.map(h => {
          const x = Math.round(70.6 + h * 6.404 - 0.5) + 0.5;
          if (x > 1141) return null;
          const red = h % 6 === 0;
          return <path key={h} d={`M${x} ${T}V${B + (red ? 3 : 1)}`} stroke={red ? '#e65a5a' : '#909090'} strokeOpacity={red ? 0.5 : 0.36} />;
        })}
        {lines.map(n => {
          const red = n % sub === 0;
          const y = Math.round(zeroY + n * minorStep - 0.5) + 0.5;
          return <path key={n} d={`M${L - 2} ${y}H${R}`} stroke={red ? '#e65a5a' : '#909090'} strokeOpacity={red ? 0.55 : 0.36} />;
        })}
      </g>
      <path d={`M${L} ${redY}H1141`} stroke={C.red} />
      <path d={`M${L - 3} ${B + 0.5}H${R + 3}M${L}.5 ${B + 3}V${T - 2}`} stroke="#555" fill="none" />
      <path d={`M${L - 3} ${T}l3.500 -5 3.500 5zM${R + 1} ${B - 2.500}l5 3 -5 3z`} fill="#555" />
      <g fontSize="9.8">
        {labels.map((t, i) => {
          const zero = t === '0' || t === '0.0';
          return <text key={t} x={zero ? 47.5 : 59.5} y={firstY + i * major + 3.5} textAnchor="end">{t}</text>;
        })}
        {days.map((d, i) => <text key={d} x={71 + i * 76.85} y="797" textAnchor="middle" textLength="54">{d}</text>)}
      </g>
      <text transform="translate(1160.500 475) rotate(90)" fontSize="8" textLength="111" fill="#aaa">RRDTOOL / TOBI OETIKER</text>
      <g fontSize="11.700">
        <text x="31" y="815">bps</text><text x="94" y="815">Now</text><text x="165" y="815">Ave</text><text x="228" y="815">Max</text><text x="290" y="815">95th %</text>
        {rows.map((r, i) => (
          <g key={r[0]}>
            <rect x="30.500" y={820.5 + i * 14} width="8" height="9" fill={i ? C.db : C.dg} stroke="#333" />
            <text x="45" y={829.5 + i * 14}>{r[0]}</text>
            {[131, 196, 261, 326].map((x, j) => <text key={x} x={x} y={829.5 + i * 14} textAnchor="end">{r[j + 1]}</text>)}
          </g>
        ))}
        <text x="31" y="857" textLength="282" style={{ whiteSpace: 'pre' }}>{total}</text>
      </g>
    </svg>
  );
};

/* thumbnails use a 183 x 180 unit space */
interface Mini { red?: number[]; a?: string; b?: string; c?: string; d?: string; }
const Thumb = ({ m }: { m: Mini }) => (
  <svg width="112" height="60" viewBox="0 0 183 180" preserveAspectRatio="none">
    {m.a && <polygon points={m.a} fill={C.lg} />}{m.b && <polygon points={m.b} fill={C.dg} />}
    {m.c && <polygon points={m.c} fill={C.lb} />}{m.d && <polygon points={m.d} fill={C.db} />}
    {m.red?.map(y => <rect key={y} y={Math.round(y / 3) * 3} width="183" height="3" fill={C.red} shapeRendering="crispEdges" />)}
  </svg>
);

const periods = ['6 Hours', '24 Hours', '48 Hours', 'One Week', 'Two Weeks', 'One Month', 'Two Months', 'One Year', 'Two Years'];
const westThumbs: Mini[] = [
  { red: [36, 102], b: '0,69 0,58 5,52 7,42 9,58 15,58 20,42 23,42 25,60 35,58 45,58 47,35 50,0 52,35 55,58 60,55 65,46 68,52 72,46 78,58 85,52 92,58 100,50 105,58 110,52 118,48 124,50 130,30 134,52 138,30 142,45 150,48 156,55 165,66 172,58 182,66 182,69', d: '0,69 2,90 6,108 10,90 15,82 20,92 22,122 26,90 30,92 33,122 37,85 45,90 48,105 50,180 52,100 60,84 66,80 72,90 80,95 88,92 95,98 102,90 108,96 115,84 122,92 130,86 138,100 145,104 150,98 158,86 165,78 175,74 182,72 182,69' },
  { red: [114, 165], a: '24,141 27,0 30,141 70,141 71,76 74,120 80,110 84,141 145,141 148,120 152,130 172,130 174,122 178,130 183,136 183,141', b: '0,141 0,120 8,128 20,126 26,118 27,10 29,128 45,128 58,120 68,128 71,82 74,115 80,110 84,141 120,141 125,136 140,132 145,136 149,125 155,136 166,134 173,126 183,138 183,141', c: '10,141 18,166 40,150 60,152 80,164 110,178 125,150 140,160 150,178 154,148 170,155 183,145 183,141', d: '0,141 8,150 18,164 28,150 40,150 60,146 75,150 84,160 100,152 110,170 120,166 126,148 140,150 150,155 156,148 183,144 183,141' },
  { red: [48, 84], a: '0,66 8,50 18,48 20,30 24,50 32,48 34,14 37,45 44,44 50,52 70,56 100,52 104,52 106,5 109,52 126,50 128,38 132,58 150,66 172,60 176,62 180,58 183,66', b: '0,66 6,56 15,48 20,54 34,42 38,56 50,58 70,60 104,56 107,50 110,58 128,52 134,60 136,66 155,66 183,64 183,66', c: '6,66 9,120 12,70 20,70 22,160 25,72 36,76 42,100 48,72 54,100 57,78 62,72 64,180 66,72 90,72 110,74 150,84 160,76 170,84 183,70 183,66', d: '0,66 6,74 9,108 12,72 40,72 60,76 100,70 120,76 140,76 160,76 183,70 183,66' },
  { red: [24], a: '88,34 90,26 92,34 130,34 137,20 140,8 144,26 152,22 158,28 162,0 165,28 172,24 183,32 183,34', b: '120,34 137,28 150,26 162,24 170,30 183,33 183,34', c: '88,34 92,68 95,40 99,66 103,42 110,52 118,42 124,46 125,178 128,178 130,40 134,66 138,44 143,60 147,40 150,90 153,42 160,40 183,37 183,34', d: '88,34 183,34 183,36 88,37' },
  { red: [27], a: '136,34 140,26 150,30 158,30 160,12 166,26 172,0 176,26 183,32 183,34', b: '158,34 162,28 174,26 183,32 183,34', c: '136,34 140,68 144,46 150,52 156,40 157,178 160,178 162,46 164,80 168,40 170,88 173,88 174,40 183,38 183,34', d: '136,34 183,34 183,37 136,37' },
  { red: [30], a: '163,34 166,28 172,28 174,10 177,24 180,0 183,28 183,34', b: '170,34 183,28 183,34', c: '163,34 165,68 169,44 171,50 172,178 174,178 176,50 180,90 182,40 183,34', d: '163,34 183,34 183,38 163,38' },
  { red: [30], a: '172,34 175,24 179,18 182,0 183,0 183,34', b: '174,34 179,28 183,26 183,34', c: '173,34 174,66 177,70 178,180 181,180 182,88 183,88 183,34', d: '174,34 183,34 183,38 174,38' },
  { a: '181.500,0 183,0 183,34 181.500,34', c: '181.500,34 183,34 183,178 181.500,178' },
  {},
];
const skiThumbs: Mini[] = [
  { red: [24, 171], b: '0,120 0,44 4,30 8,0 12,24 16,52 22,36 28,56 34,62 40,18 44,20 46,60 52,54 58,68 66,74 78,72 82,30 86,10 90,60 94,86 100,92 108,84 114,66 118,70 122,96 132,102 140,98 148,104 150,84 154,104 170,106 183,108 183,120', d: '0,120 0,142 10,146 20,140 28,156 40,162 46,158 50,180 56,170 64,172 76,162 90,166 98,160 108,172 118,164 130,168 140,160 150,154 165,158 172,156 176,140 183,138 183,120' },
  { red: [39, 174], a: '0,120 0,72 6,66 10,0 14,54 22,60 28,20 32,56 44,62 50,6 56,20 62,50 68,38 74,66 84,62 94,56 106,62 118,50 126,62 136,52 140,76 150,78 158,66 160,80 168,98 175,102 183,118 183,120', b: '0,120 0,76 6,68 10,20 14,54 22,70 28,36 32,70 44,66 50,34 56,38 62,70 68,60 74,74 84,72 94,62 106,80 118,60 128,66 134,92 140,78 150,82 158,78 162,90 170,104 183,114 183,120', c: '0,120 5,144 14,150 20,170 30,160 46,178 60,168 80,178 104,180 112,158 124,148 130,124 150,154 160,140 175,146 183,132 183,120', d: '0,120 5,140 14,146 20,164 30,154 46,172 60,160 80,176 102,176 110,155 124,144 130,126 150,150 160,136 175,142 183,132 183,120' },
  { red: [39, 171], a: '0,123 0,20 4,0 8,50 16,30 22,4 28,40 38,22 42,5 48,28 58,44 64,20 68,70 76,84 86,90 94,84 96,22 102,48 114,50 120,24 126,60 134,46 142,62 156,54 164,72 172,80 178,104 183,118 183,123', b: '0,123 0,60 5,46 10,66 16,40 22,36 28,60 40,34 50,38 60,42 66,50 70,80 80,96 90,96 94,88 98,50 106,58 118,68 126,46 132,70 142,76 156,76 166,86 174,96 183,118 183,123', c: '0,123 6,158 14,150 24,174 34,168 42,180 56,170 70,154 90,148 100,152 104,176 110,146 118,176 130,166 142,180 150,164 158,136 170,154 183,138 183,123', d: '0,123 6,148 14,144 24,164 34,160 42,174 56,160 70,146 90,144 104,160 118,168 130,160 142,170 150,156 158,138 170,150 183,138 183,123' },
  { red: [75], a: '52,138 54,128 62,126 66,84 70,130 76,134 84,98 86,126 90,70 91,26 94,26 96,0 99,80 104,90 108,50 114,70 117,44 124,60 130,50 136,70 144,56 150,60 154,110 160,100 166,70 170,72 180,98 183,120 183,138', b: '52,138 56,132 66,130 80,134 90,128 94,60 98,60 104,110 112,80 120,80 128,86 136,78 144,76 150,90 156,124 162,100 166,98 172,110 180,120 183,134 183,138', c: '62,138 66,150 76,142 90,142 92,170 98,156 106,164 118,180 128,160 142,180 154,156 158,170 168,166 178,178 183,154 183,138', d: '30,138 40,138 40,141 30,141 30,138 90,140 92,160 100,150 118,178 128,154 142,176 154,150 160,165 170,160 178,174 183,154 183,138' },
  { red: [81], a: '118,138 122,130 126,88 128,130 134,130 137,22 140,22 141,0 144,0 145,66 148,54 151,42 154,62 160,54 166,56 170,86 172,68 178,78 180,96 183,100 183,138', b: '118,138 126,132 134,130 138,88 141,76 146,92 152,76 158,92 164,84 168,106 174,100 180,102 183,116 183,138', c: '120,138 126,146 134,144 138,172 144,156 151,180 158,160 165,180 170,160 178,174 183,168 183,138', d: '108,138 112,138 112,141 108,141 108,138 136,140 140,160 151,170 158,150 165,168 172,152 178,162 183,156 183,138' },
  { red: [90], a: '154,138 156,84 158,130 161,84 163,0 166,50 170,42 176,56 180,66 183,76 183,138', b: '156,138 161,128 166,94 170,80 174,84 178,100 183,108 183,138', c: '156,138 162,154 168,176 174,170 180,178 183,166 183,138', d: '148,138 150,138 150,141 148,141 148,138 160,140 170,164 183,158 183,138' },
  { red: [120], a: '169,138 170,86 173,0 176,0 178,50 183,64 183,138', b: '171,138 175,88 179,94 183,106 183,138', c: '169,138 172,170 175,180 181,180 183,176 183,138', d: '170,138 174,160 183,162 183,138' },
  { a: '181.500,0 183,0 183,138 181.500,138', b: '181.500,100 183,100 183,138 181.500,138', c: '181.500,138 183,138 183,180 181.500,180' },
  {},
];

/* ---------- composed pieces ---------- */
const menu: [string, string][] = [['bulb', 'Overview'], ['server', 'Devices'], ['plug', 'Ports'], ['gauge', 'Health'], ['route', 'Routing'], ['', 'Plugins'], ['wrench', 'System']];

const WindowControls = ({ aero }: { aero?: boolean }) => {
  const s = aero ? '#5a6d74' : '#222';
  return (
    <Controls $aero={aero}>
      <ControlCell $kind="plain" $aero={aero}><svg width="13" height="12"><rect x=".5" y="6.500" width="11" height="4" fill="#fff" stroke={s} /></svg></ControlCell>
      <ControlCell $kind="plain" $aero={aero}><svg width="13" height="13"><path d="M4 1.500h8v8h-8z" fill="#fff" stroke={s} /><path d="M1.500 4h7v8h-7z" fill="#fff" stroke={s} /><path d="M4 7h2v2H4z" fill={s} /></svg></ControlCell>
      <ControlCell $kind="close" $aero={aero}><svg width="13" height="12"><path d="M2 1.500l9 9M11 1.500l-9 9" stroke={s} strokeWidth="4" /><path d="M2 1.500l9 9M11 1.500l-9 9" stroke="#fff" strokeWidth="2.400" /></svg></ControlCell>
    </Controls>
  );
};

const Tab = ({ icon, text, active, wide }: { icon?: string; text: string; active?: boolean; wide?: boolean }) => (
  <TabBox $active={active} $wide={wide}>
    {icon && <Favicon k={icon} />}
    <TabText $noicon={!icon}>{text}</TabText>
    <Close c={active ? '#333' : '#5b636d'} />
  </TabBox>
);

interface PageProps { url: string; host: string; port: string; time: string; thumbs: Mini[]; graph: React.ReactNode; }
const BrowserPage = ({ url, host, port, time, thumbs, graph }: PageProps) => (
  <>
    <Toolbar>
      <NavButtons><ToolIcon k="back" /><ToolIcon k="fwd" /><ToolIcon k="reload" /><ToolIcon k="home" /></NavButtons>
      <Omnibox>
        <Page s={17} />
        <Url><b>librenms.pp23.polarparty.no</b>{url}</Url>
        <ToolIcon k="star" />
      </Omnibox>
      <Extensions><ToolIcon k="note" /><ToolIcon k="abp" /><ToolIcon k="g" /><ToolIcon k="menu" /></Extensions>
    </Toolbar>
    <Navbar>
      <Brand>LibreNMS</Brand>
      {menu.map(([k, t]) => <NavItem key={t}>{k && <NavIcon k={k} />}{t}</NavItem>)}
      <SearchBox>Global Search</SearchBox>
    </Navbar>
    <Well $h={60} $mt={9}>
      <TitleRow>
        <span><a className="host">{host}</a> :: Port <a>{port}</a> :: Bits</span>
        <Select>Bits</Select>
      </TitleRow>
    </Well>
    <Well $h={249} $mt={20}>
      <Strip>{periods.map((p, i) => <Cell key={p}><b>{p}</b><Thumb m={thumbs[i]} /></Cell>)}</Strip>
      <Rule $mt={20} />
      <FormRow>
        <b>From:</b><Field $w={183}>2014-09-27 {time}</Field>
        <b>To:</b><Field $w={183}>2014-10-04 {time}</Field>
        <Field $w={52} $button>Update</Field>
      </FormRow>
      <Rule $mt={21} />
      <LinkRow>
        <span><Link>Hide Legend</Link> | <Link>Show Previous</Link></span>
        <Link>Show RRD Command</Link>
      </LinkRow>
    </Well>
    <GraphArea>{graph}</GraphArea>
    <Footer>
      Powered by <Link>LibreNMS 2014.master</Link>.<br />
      LibreNMS is <Link>Free Software</Link>, released under the <Link>GNU GPLv3</Link>.<br />
      Copyright © 2013-2014 by the LibreNMS Contributors.<br />
      Copyright © 2006-2012 by Adam Armstrong.
    </Footer>
  </>
);

const laterTasks: [string, string, number, number][] = [
  ['cgreen', 'Connectif...', 0, 28], ['cblue', 'Connectif...', 4, 28], ['ut', 'µTorrent 3...', 4, 28], ['spot', 'Spotify', 4, 28],
  ['skype', 'Skype™ - ...', 4, 28], ['perf', 'Windows ...', 4, 28], ['vm', 'Windows ...', 4, 28], ['sys', 'System', 4, 28],
  ['shot', 'net pp23 f...', 4, 29], ['shot', 'Screensho...', 0, 29], ['note', 'Untitled - ...', 4, 28], ['vol', 'Volume M...', 4, 28], ['db', 'Dropbox P...', 4, 28],
];

export default function App() {
  return (
    <Desktop>
      <Global />
      <Window $w={1816}>
        <TitleBar>
          <Tab icon="wiki" text="pp23:ip-pla" /><Tab icon="wiki" text="pp23:start [" /><Tab icon="trello" text="(3) Error | Tr" />
          <Tab icon="page" text="404 Not Fo" /><Tab icon="trellor" text="(3) Opprigg" /><Tab icon="trellor" text="(3) Opprigg" />
          <Tab icon="geek" text="Geekevents" /><Tab icon="doc" text="pp23 linkne" /><Tab text="Ny fane" />
          <Tab icon="page" text="Devices - Li" /><Tab icon="page" text="LibreNMS" active /><Tab icon="page" text="infoskjerm" />
          <Tab icon="git" text="librenms/lib" /><Tab icon="gmail" text="Fwd: Nettp" />
          <NewTab />
          <WindowControls />
        </TitleBar>
        <BrowserPage
          url="/graphs/to=1412413445/id=45/type=port_bits/from=1411808645/"
          host="westgw.pp23.polarparty.no" port="GigabitEthernet1/0/2" time="11:04" thumbs={westThumbs}
          graph={<Graph data={west} offset={0} zeroY={538.5} major={28.75} sub={5} firstY={509.7} redY={528.5}
            labels={['100 M', '0', '-100 M', '-200 M', '-300 M', '-400 M', '-500 M', '-600 M', '-700 M', '-800 M']}
            rows={[['In', '2.59M', '8.53M', '182.50M', '33.42M'], ['Out', '2.69M', '12.33M', '859.15M', '31.16M']]}
            total="Total   1.24T  (In 506.20G  Out 731.72G)" />}
        />
        <DownloadBar>
          <DownloadItem>
            <span>
              <svg width="18" height="16" viewBox="0 0 18 16"><path d="M1 3l9-2 7 7-6 6-9-3z" fill="#d8572c" /><path d="M4 9l7-5 4 4-6 5z" fill="#f3c64c" /><path d="M2 11l5 1v3l-5-1z" fill="#3d3d3d" /></svg>
              net pp23 fredag 1800.png
            </span>
            <i />
          </DownloadItem>
          <ShowAll>
            <svg width="11" height="12" viewBox="0 0 11 12"><path d="M3 0h5v5h3L5.500 12 0 5h3z" fill="#5c5c5c" /></svg>
            <u>Vis alle nedlastinger</u>
            <Close />
          </ShowAll>
        </DownloadBar>
      </Window>

      <Taskbar>
        <Orb><StartOrb /></Orb>
        <Task $mt={0} $h={29}><TaskGlyph k="folder" />A.Million....</Task>
        <Task $mt={0} $h={30}><TaskGlyph k="dbfolder" />Dropbox (...</Task>
        <Task $mt={0} $h={29}><TaskGlyph k="folder" />Screenshots</Task>
        <TaskIcon $h={36}><TaskGlyph k="rdp" /></TaskIcon>
        <Task $mt={0} $lit><TaskGlyph k="chrome" />Google ...</Task>
        <TaskIcon $h={36}><TaskGlyph k="opera" /></TaskIcon>
        <Task $mt={0}><TaskGlyph k="globe" />NFV – hve...</Task>
        <TaskIcon $h={36}><TaskGlyph k="clap" /></TaskIcon>
        {laterTasks.map(([k, t, mt, h], i) => <Task key={i} $mt={mt} $h={h}><TaskGlyph k={k} />{t}</Task>)}
        <TrayArrow />
        <Tray>
          <svg width="16" height="16" viewBox="0 0 16 16"><path d="M2 1v14" stroke="#fff" strokeWidth="1.500" /><path d="M3 2h6v2h5v6H8V8H3z" fill="#fff" /><circle cx="11" cy="11" r="4.500" fill="#d8261c" /><path d="M9 9l4 4M13 9l-4 4" stroke="#fff" strokeWidth="1.500" /></svg>
          <svg width="16" height="16" viewBox="0 0 16 16"><path d="M5 3.500h10v8H5zM7 14.500h6M10 11.500v3M1 1v4h4V1M3 5v9" fill="none" stroke="#fff" strokeWidth="1.300" /></svg>
          <svg width="16" height="16" viewBox="0 0 16 16"><path d="M1 5h2l4-4v14l-4-4H1z" fill="#fff" /><path d="M9.500 5.500q2 2.500 0 5M12 3.500q3.500 4.500 0 9" stroke="#fff" fill="none" strokeWidth="1.200" /></svg>
          <svg width="17" height="17" viewBox="0 0 17 17"><path d="M4.500 1l4 2.700-4 2.700-4-2.700zM12.500 1l4 2.700-4 2.700-4-2.700zM4.500 6.500l4 2.700-4 2.700-4-2.700z" fill="#6cbcf5" /><circle cx="12" cy="12" r="4.500" fill="#d8261c" /><path d="M10 10l4 4M14 10l-4 4" stroke="#fff" strokeWidth="1.500" /></svg>
        </Tray>
        <Clock>11:03<br />lørdag<br />04.10.2014</Clock>
        <ShowDesktop />
      </Taskbar>

      <Window $w={1920}>
        <TitleBar $aero>
          <Haze $l={0} $w={10} $c="#7fb6de" /><Haze $l={232} $w={116} $c="#84a9cc" /><Haze $l={400} $w={14} $c="#58bdf0" />
          <Haze $l={535} $w={110} $c="#a5dcec" /><Haze $l={700} $w={150} $c="#a5dcec" /><Haze $l={1000} $w={120} $c="#92cfe2" /><Haze $l={1190} $w={120} $c="#92cfe2" /><Haze $l={1456} $w={10} $c="#7cc6e4" />
          <Tab icon="page" text="LibreNMS" active wide />
          <NewTab $aero />
          <WindowControls aero />
        </TitleBar>
        <BrowserPage
          url="/graphs/to=1412412810/id=157/type=port_bits/from=1411808010/"
          host="skigw.pp23.polarparty.no" port="TenGigabitEthernet5/4" time="10:53" thumbs={skiThumbs}
          graph={<Graph data={ski} offset={10} zeroY={715.7} major={20.49} sub={2} firstY={490.3} redY={611.5}
            labels={['2.2 G', '2.0 G', '1.8 G', '1.6 G', '1.4 G', '1.2 G', '1.0 G', '0.8 G', '0.6 G', '0.4 G', '0.2 G', '0.0', '-0.2 G', '-0.4 G', '-0.6 G']}
            rows={[['In', '65.97M', '483.66M', '2.25G', '1.02G'], ['Out', '135.78M', '224.00M', '683.35M', '524.75M']]}
            total="Total  42.19T  (In  28.84T  Out  13.36T)" />}
        />
      </Window>
    </Desktop>
  );
}
